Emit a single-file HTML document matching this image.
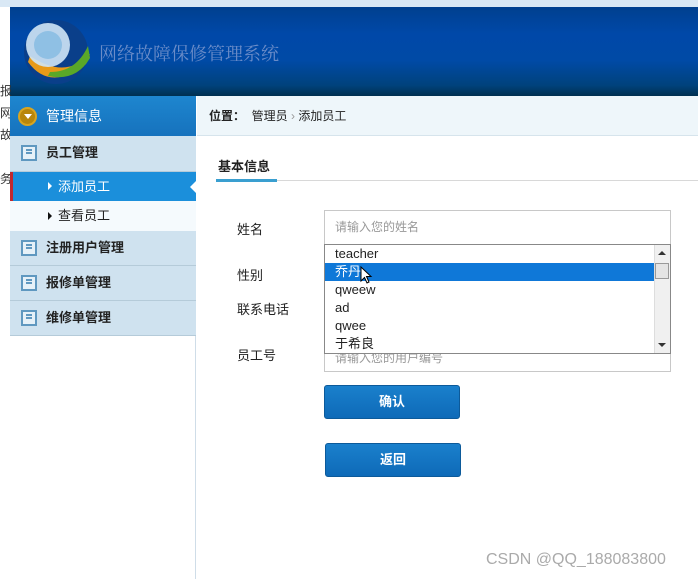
<!DOCTYPE html>
<html><head><meta charset="utf-8"><style>
*{margin:0;padding:0;box-sizing:border-box}
body{width:698px;height:579px;overflow:hidden;background:#fff;font-family:"Liberation Sans","Noto Sans CJK SC",sans-serif;position:relative;font-size:13px;color:#222}
.a{position:absolute}
.banner{left:10px;top:7px;width:688px;height:89px;background:linear-gradient(#00408f 0%,#0048a8 30%,#004aa6 60%,#00427c 88%,#003050 100%)}
.side{left:10px;top:96px;width:186px;height:483px;background:#fff;border-right:1px solid #cfdde8}
.item{position:absolute;left:10px;width:186px;background:#cfe2ef;border-bottom:1px solid #b5cbd9;font-weight:bold;font-size:13px;line-height:34px;padding-left:36px}
.ico{position:absolute;left:11px;top:9px;width:16px;height:16px;border:2px solid #5f98c0;background:#e6f1f8}
.ico:before{content:"";position:absolute;left:3px;top:2px;width:6px;height:8px;border-top:2px solid #5f98c0;border-bottom:2px solid #5f98c0}
.ico:after{content:"";position:absolute;left:3px;top:5px;width:6px;height:2px;background:#5f98c0}
.lbl{position:absolute;left:237px;font-size:13px}
.btn{position:absolute;width:136px;height:34px;background:linear-gradient(#1a80cc,#0e6ab8);border:1px solid #0c5a9a;border-radius:3px;color:#fff;font-weight:bold;text-align:center;line-height:32px;font-size:13px}
.opt{height:18px;line-height:18px;padding-left:10px;font-size:13px}
</style></head><body>
<div class="a" style="left:0;top:0;width:698px;height:7px;background:#d9e8f5"></div>
<div class="a banner"></div>
<svg class="a" style="left:20px;top:16px" width="76" height="72" viewBox="0 0 76 72">
<circle cx="36" cy="36" r="32" fill="#0a3f8a"/>
<path d="M8 46 Q30 76 66 48 L70 38 Q46 64 10 40Z" fill="#e89a18"/>
<path d="M30 56 Q56 56 68 30 L70 42 Q56 66 28 60Z" fill="#5aa828"/>
<circle cx="28" cy="29" r="22" fill="#cfe6f6" opacity=".9"/>
<circle cx="28" cy="29" r="14" fill="#8fc0e4"/>
</svg>
<div class="a" style="left:99px;top:40px;color:#6a8cc8;font-size:18px;font-family:'Noto Serif CJK SC',serif">网络故障保修管理系统</div>
<div class="a" style="left:0;top:80px;font-size:12px;color:#333;line-height:22px">报<br>网<br>故<br><br>务</div>
<div class="a side"></div>
<div class="a" style="left:10px;top:96px;width:186px;height:40px;background:linear-gradient(#1e86cf,#1672bd);color:#fff;font-size:14px;line-height:40px;padding-left:36px">管理信息</div>
<div class="a" style="left:18px;top:107px;width:19px;height:19px;border-radius:50%;background:#b8860b;border:2px solid #d9a520"></div>
<div class="a" style="left:24px;top:114px;border-left:4px solid transparent;border-right:4px solid transparent;border-top:5px solid #fff"></div>
<div class="item" style="top:136px;height:36px"><span class="ico"></span>员工管理</div>
<div class="a" style="left:10px;top:172px;width:186px;height:29px;background:#1b8fdb;color:#fff;line-height:29px;padding-left:45px;font-size:13px;border-left:3px solid #c0282e">添加员工</div>
<div class="a" style="left:48px;top:182px;border-top:4px solid transparent;border-bottom:4px solid transparent;border-left:4px solid #fff"></div>
<div class="a" style="left:190px;top:180px;border-top:7px solid transparent;border-bottom:7px solid transparent;border-right:7px solid #fff"></div>
<div class="a" style="left:10px;top:201px;width:186px;height:30px;background:#f5fafd;line-height:30px;padding-left:48px">查看员工</div>
<div class="a" style="left:48px;top:212px;border-top:4px solid transparent;border-bottom:4px solid transparent;border-left:4px solid #111"></div>
<div class="item" style="top:231px;height:35px"><span class="ico"></span>注册用户管理</div>
<div class="item" style="top:266px;height:35px"><span class="ico"></span>报修单管理</div>
<div class="item" style="top:301px;height:35px"><span class="ico"></span>维修单管理</div>
<div class="a" style="left:197px;top:96px;width:501px;height:40px;background:#eef6fa;border-bottom:1px solid #d6e4ec;line-height:40px;padding-left:12px;font-size:12px"><b>位置：</b>&nbsp; 管理员 <span style="color:#999">›</span> 添加员工</div>
<div class="a" style="left:218px;top:156px;font-weight:bold;font-size:13px">基本信息</div>
<div class="a" style="left:216px;top:180px;width:482px;height:1px;background:#d8d8d8"></div>
<div class="a" style="left:216px;top:179px;width:61px;height:3px;background:#3a9fd0"></div>
<div class="lbl" style="top:219px">姓名</div>
<div class="lbl" style="top:265px">性别</div>
<div class="lbl" style="top:299px">联系电话</div>
<div class="lbl" style="top:345px">员工号</div>
<div class="a" style="left:324px;top:210px;width:347px;height:35px;border:1px solid #c8c8c8;line-height:33px;padding-left:10px;color:#999;font-size:12px">请输入您的姓名</div>
<div class="a" style="left:324px;top:352px;width:347px;height:20px;border:1px solid #c8c8c8;line-height:10px;padding-left:10px;color:#999;font-size:12px;overflow:hidden">请输入您的用户编号</div>
<div class="a" style="left:324px;top:244px;width:347px;height:110px;border:1px solid #888;background:#fff">
<div style="margin-right:16px">
<div class="opt">teacher</div>
<div class="opt" style="background:#0f78d8;color:#fff">乔丹</div>
<div class="opt">qweew</div>
<div class="opt">ad</div>
<div class="opt">qwee</div>
<div class="opt">于希良</div>
</div>
<div style="position:absolute;right:0;top:0;width:16px;height:108px;background:#f0f0f0;border-left:1px solid #ddd"></div>
<div style="position:absolute;right:1px;top:18px;width:14px;height:16px;background:#e4e4e4;border:1px solid #999"></div>
<div style="position:absolute;right:4px;top:6px;border-left:4px solid transparent;border-right:4px solid transparent;border-bottom:4px solid #333"></div>
<div style="position:absolute;right:4px;bottom:6px;border-left:4px solid transparent;border-right:4px solid transparent;border-top:4px solid #333"></div>
</div>
<svg class="a" style="left:360px;top:266px" width="14" height="20"><path d="M1 1 L1 15 L4.5 11.5 L7 17 L9 16 L6.5 10.5 L11 10.5Z" fill="#fff" stroke="#000" stroke-width="1"/></svg>
<div class="btn" style="left:324px;top:385px">确认</div>
<div class="btn" style="left:325px;top:443px">返回</div>
<div class="a" style="left:486px;top:551px;color:#aaa;font-size:16px">CSDN @QQ_188083800</div>
</body></html>
